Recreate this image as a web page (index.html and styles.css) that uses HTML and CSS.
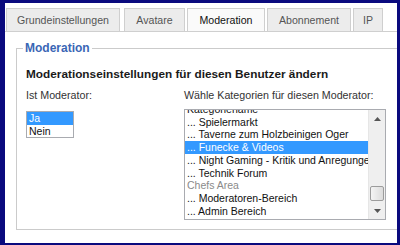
FILE: index.html
```html
<!DOCTYPE html>
<html lang="de">
<head>
<meta charset="utf-8">
<link rel="stylesheet" href="styles.css">
</head>
<body>
<div class="window">
  <div class="tabs">
    <div class="tab t-grund">Grundeinstellungen</div>
    <div class="tab t-avatar">Avatare</div>
    <div class="tab t-mod active">Moderation</div>
    <div class="tab t-abo">Abonnement</div>
    <div class="tab t-ip">IP</div>
  </div>
  <div class="panel">
    <fieldset class="box">
      <legend>Moderation</legend>
      <div class="heading">Moderationseinstellungen für diesen Benutzer ändern</div>
      <div class="cols">
        <div class="col">
          <div class="label">Ist Moderator:</div>
          <div class="list small">
            <div class="opt sel">Ja</div>
            <div class="opt">Nein</div>
          </div>
        </div>
        <div class="col">
          <div class="label">Wähle Kategorien für diesen Moderator:</div>
          <div class="list big">
            <div class="items">
              <div class="opt">Kategoriename</div>
              <div class="opt">... Spielermarkt</div>
              <div class="opt">... Taverne zum Holzbeinigen Oger</div>
              <div class="opt sel">... Funecke &amp; Videos</div>
              <div class="opt">... Night Gaming - Kritik und Anregungen</div>
              <div class="opt">... Technik Forum</div>
              <div class="opt group">Chefs Area</div>
              <div class="opt">... Moderatoren-Bereich</div>
              <div class="opt">... Admin Bereich</div>
            </div>
            <div class="scrollbar">
              <div class="btn"><svg width="7" height="4" viewBox="0 0 7 4"><path d="M0 4 L3.5 0 L7 4 Z" fill="#555"/></svg></div>
              <div class="track"><div class="thumb"></div></div>
              <div class="btn"><svg width="7" height="4" viewBox="0 0 7 4"><path d="M0 0 L3.5 4 L7 0 Z" fill="#555"/></svg></div>
            </div>
          </div>
        </div>
      </div>
    </fieldset>
  </div>
</div>
</body>
</html>
```

FILE: styles.css
```css
html, body {
  margin: 0;
  padding: 0;
}
body {
  background: #0a0a7e;
  width: 400px;
  height: 245px;
  overflow: hidden;
  font-family: "Liberation Sans", Arial, sans-serif;
  font-size: 10.7px;
  color: #222;
}
.window {
  margin: 3px 3px 2px 5px;
  height: 240px;
  background: #fff;
  overflow: hidden;
  display: flex;
  flex-direction: column;
}
.tabs {
  display: flex;
  padding: 5px 0 0 1px;
  gap: 2px;
  height: 23px;
}
.tab {
  box-sizing: border-box;
  height: 23px;
  border: 1px solid #cfcfcf;
  border-bottom: none;
  background: #ececec;
  color: #555;
  font-size: 10.6px;
  line-height: 22px;
  text-align: center;
  white-space: nowrap;
}
.t-grund { width: 114px; margin-right: 2px; }
.t-avatar { width: 61px; }
.t-mod { width: 78px; }
.t-abo { width: 84px; }
.t-ip { width: 30px; }
.tab.active {
  background: #fafafa;
  color: #111;
  height: 24px;
}
.panel {
  border-top: 1px solid #cfcfcf;
  flex: 1;
  display: flex;
  flex-direction: column;
  padding: 9px 0 13px 11px;
}
.box {
  flex: 1;
  margin: 0;
  border: 1px solid #cbcbcb;
  border-right: none;
  padding: 12px 0 0 9px;
  min-width: 0;
}
.box legend {
  color: #3a66b5;
  font-weight: bold;
  font-size: 12px;
  padding: 0 2px;
  margin-left: -3px;
}
.heading {
  font-weight: bold;
  font-size: 11.8px;
  line-height: 14px;
  color: #1a1a1a;
}
.cols {
  display: grid;
  grid-template-columns: 158px 202px;
  margin-top: 8px;
}
.label {
  color: #333;
  line-height: 13px;
}
.list {
  border: 1px solid #a9abb0;
  background: #fff;
  color: #111;
}
.small {
  width: 46px;
  margin-top: 9px;
}
.opt {
  line-height: 12.7px;
  padding-left: 2px;
  white-space: nowrap;
  font-size: 10.5px;
}
.opt.sel {
  background: #3399ff;
  color: #fff;
}
.big {
  margin-top: 7px;
  height: 109px;
  display: flex;
  overflow: hidden;
}
.items {
  flex: 1;
  min-width: 0;
  overflow: hidden;
  margin-top: -7px;
}
.group {
  color: #8a8a8a;
}
.scrollbar {
  width: 16px;
  background: #efefef;
  border-left: 1px solid #e6e6e6;
  display: flex;
  flex-direction: column;
}
.btn {
  height: 17px;
  display: flex;
  align-items: center;
  justify-content: center;
}
.track {
  flex: 1;
  display: flex;
  flex-direction: column;
  justify-content: flex-end;
  padding: 0 1px 1px 1px;
}
.thumb {
  height: 13px;
  border: 1px solid #9c9c9c;
  border-radius: 2px;
  background: linear-gradient(to right, #f4f4f4, #dcdcdc);
}
```
